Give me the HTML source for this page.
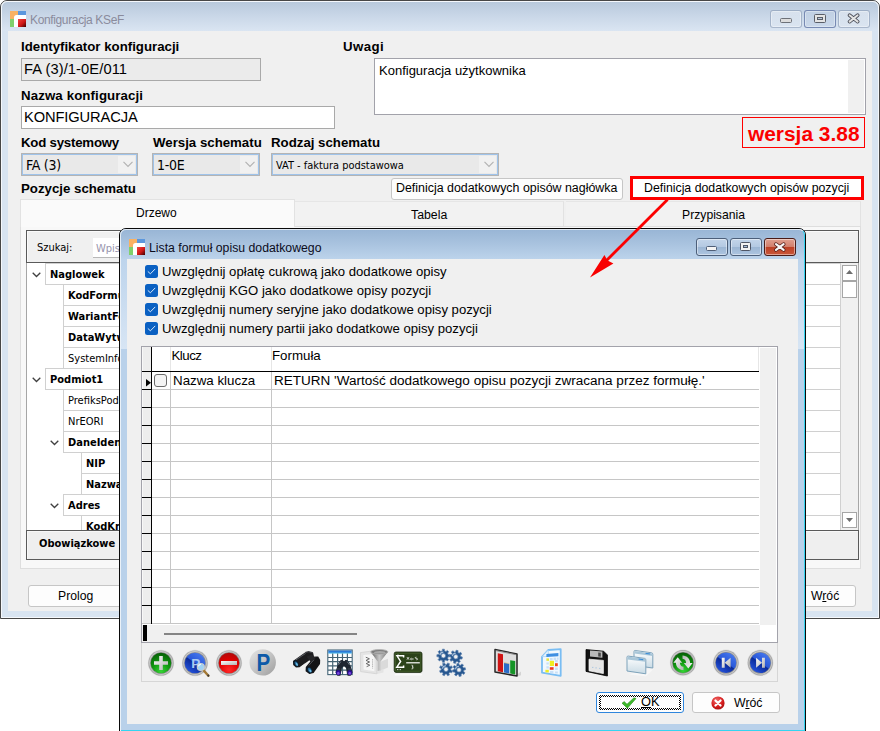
<!DOCTYPE html>
<html lang="pl">
<head>
<meta charset="utf-8">
<title>Konfiguracja KSeF</title>
<style>
html,body{margin:0;padding:0;background:#fff;}
body{width:880px;height:731px;overflow:hidden;position:relative;font-family:"Liberation Sans",sans-serif;color:#000;}
*{box-sizing:border-box;}
.a{position:absolute;}
.t{position:absolute;white-space:nowrap;line-height:1;}
.b13{font-weight:bold;font-size:13.25px;}
.tah{font-family:"DejaVu Sans Condensed","DejaVu Sans",sans-serif;}
/* main window */
#w1{left:0;top:0;width:880px;height:619px;border:1px solid #474747;border-radius:7px 7px 0 0;background:#d8e4f1;}
#w1 .hl{left:0;top:0;right:0;bottom:0;border:1px solid rgba(255,255,255,.75);border-radius:6px 6px 0 0;}
#w1 .tb{left:1px;top:1px;right:1px;height:29px;border-radius:5px 5px 0 0;background:linear-gradient(#b8c9dc 0%,#c8d6e7 45%,#dae5f2 100%);}
#c1{left:8px;top:31px;width:864px;height:580px;background:#f0f0f0;}
.cb{position:absolute;top:10px;height:18px;width:32px;border:1px solid rgba(120,140,170,.55);border-radius:3px;background:linear-gradient(rgba(255,255,255,.35),rgba(255,255,255,.12));box-shadow:inset 0 0 0 1px rgba(255,255,255,.35);}
.inp{position:absolute;border:1px solid #a9a9a9;background:#fff;}
.combo{position:absolute;height:23px;border:1px solid #b4b4b4;background:#e9e9e9;box-shadow:inset 0 0 0 1px #9fc3ea;}
.combo .dd{position:absolute;right:2px;top:2px;bottom:2px;width:17px;background:#f1f1f1;}
.btn{position:absolute;border:1px solid #c6c6c6;border-radius:3px;background:#fdfdfd;font-size:12px;}
.tree{font-family:"DejaVu Sans Condensed","DejaVu Sans",sans-serif;}
.tree .r{position:absolute;height:22px;border:1px solid #d0d0d0;background:#fff;right:17px;}
.tree .r span{position:absolute;left:4px;top:5.3px;font-size:11px;line-height:1;white-space:nowrap;}
/* dialog */
#w2{left:119px;top:228px;width:687px;height:520px;border:1px solid #0a0a0a;border-radius:7px 7px 0 0;background:#b9d1ea;}

.cb2{top:238px;height:18px;width:32px;border:1px solid #4c5f7a;border-radius:3px;background:linear-gradient(#c3d5ea 0%,#b4c9e2 48%,#9cb6d4 52%,#adc5e0 100%);box-shadow:inset 0 0 0 1px rgba(255,255,255,.45);}
.cbx{border-color:#4a1c18;background:linear-gradient(#e0a090 0%,#d27f6c 48%,#bd4126 52%,#c9573a 100%);}
</style>
</head>
<body>
<!-- ================= MAIN WINDOW ================= -->
<div id="w1" class="a">
 <div class="a tb"></div>
 <div class="a hl"></div>
</div>
<div id="c1" class="a"></div>

<!-- title bar main -->
<svg class="a" style="left:10px;top:11px" width="16" height="16" viewBox="0 0 16 16">
 <rect x="0" y="0" width="8" height="8" fill="#f9b162"/>
 <rect x="8" y="0" width="8" height="4" fill="#5b97dd"/>
 <rect x="0" y="8" width="4" height="8" fill="#7fd06c"/>
 <path d="M4 16V6.5Q4 4 6.5 4H16V16Z" fill="#fff"/>
 <defs><linearGradient id="rg" x1="0" y1="0" x2="1" y2="1"><stop offset="0" stop-color="#f0453f"/><stop offset=".55" stop-color="#d01818"/><stop offset="1" stop-color="#3a0000"/></linearGradient></defs>
 <rect x="8" y="8" width="8" height="8" fill="url(#rg)"/>
</svg>
<div class="t" style="left:30px;top:14px;font-size:12px;letter-spacing:-.36px;color:#8a8b9c">Konfiguracja KSeF</div>
<div class="cb" style="left:770px"><i class="a" style="left:9px;top:7px;width:12px;height:5px;border:1px solid #6d7178;border-radius:1.5px;background:#dcdcdc"></i></div>
<div class="cb" style="left:804px;border-color:rgba(100,120,165,.8);background:rgba(190,205,228,.5)"><i class="a" style="left:9px;top:3px;width:12px;height:9px;border:1px solid #5a5e68;border-radius:1.5px;background:#e4e4e4"></i><i class="a" style="left:12px;top:6px;width:6px;height:3px;border:1px solid #5a5e68;background:#b9c8dc"></i></div>
<div class="cb" style="left:838px"><svg class="a" style="left:8px;top:2px" width="14" height="11" viewBox="0 0 14 11"><path d="M2.6 2.2L10.6 8.6M10.6 2.2L2.6 8.6" stroke="#474a55" stroke-width="3.7" stroke-linecap="round"/><path d="M2.6 2.2L10.6 8.6M10.6 2.2L2.6 8.6" stroke="#e2e2e2" stroke-width="2" stroke-linecap="round"/></svg></div>

<!-- form -->
<div class="t b13" style="left:21px;top:40px">Identyfikator konfiguracji</div>
<div class="inp" style="left:21px;top:58px;width:240px;height:23px;background:#ebebeb"></div>
<div class="t" style="left:24px;top:62px;font-size:14.67px;letter-spacing:.1px">FA (3)/1-0E/011</div>
<div class="t b13" style="left:343px;top:40px;letter-spacing:.4px">Uwagi</div>
<div class="inp" style="left:374px;top:58px;width:492px;height:57px;border-color:#a2a2aa"><i class="a" style="right:1px;top:1px;bottom:1px;width:16px;background:#f0f0f0"></i></div>
<div class="t" style="left:379px;top:64px;font-size:13px">Konfiguracja użytkownika</div>
<div class="t b13" style="left:21px;top:89px;letter-spacing:.12px">Nazwa konfiguracji</div>
<div class="inp" style="left:21px;top:106px;width:314px;height:23px"></div>
<div class="t" style="left:24px;top:110px;font-size:14.67px;letter-spacing:-.1px">KONFIGURACJA</div>
<div class="t b13" style="left:21px;top:136px;letter-spacing:-.22px">Kod systemowy</div>
<div class="t b13" style="left:153px;top:136px">Wersja schematu</div>
<div class="t b13" style="left:271px;top:136px">Rodzaj schematu</div>
<div class="combo" style="left:21px;top:153px;width:117px"><i class="dd"></i></div>
<div class="combo" style="left:152px;top:153px;width:108px"><i class="dd"></i></div>
<div class="combo" style="left:271px;top:153px;width:228px"><i class="dd"></i></div>
<div class="t tah" style="left:26px;top:158px;font-size:14px;letter-spacing:-.25px">FA (3)</div>
<div class="t tah" style="left:157px;top:158px;font-size:14px;letter-spacing:-.25px">1-0E</div>
<div class="t tah" style="left:276px;top:161.2px;font-size:10.95px">VAT - faktura podstawowa</div>
<svg class="a" style="left:123px;top:161px" width="10" height="7"><path d="M0.5 0.8L5 5.3 9.5 0.8" fill="none" stroke="#b3b3b3" stroke-width="1.2"/></svg>
<svg class="a" style="left:245px;top:161px" width="10" height="7"><path d="M0.5 0.8L5 5.3 9.5 0.8" fill="none" stroke="#b3b3b3" stroke-width="1.2"/></svg>
<svg class="a" style="left:484px;top:161px" width="10" height="7"><path d="M0.5 0.8L5 5.3 9.5 0.8" fill="none" stroke="#b3b3b3" stroke-width="1.2"/></svg>
<div class="a" style="left:742px;top:117px;width:123px;height:31px;border:1px solid #f00"></div>
<div class="t" style="left:748px;top:124px;font-size:20.9px;font-weight:bold;color:#fb0000">wersja 3.88</div>
<div class="t b13" style="left:21px;top:182px">Pozycje schematu</div>
<div class="btn" style="left:391px;top:178px;width:232px;height:22px"></div>
<div class="t" style="left:396px;top:182px;font-size:12.42px">Definicja dodatkowych opisów nagłówka</div>
<div class="a" style="left:630px;top:176px;width:234px;height:24px;border:3px solid #fe0000;background:#fff"></div>
<div class="t" style="left:644px;top:182px;font-size:12.32px">Definicja dodatkowych opisów pozycji</div>

<!-- tabs -->
<div class="a" style="left:20px;top:226px;width:841px;height:343px;background:#f8f8f8;border:1px solid #dedede"></div>
<div class="a" style="left:20px;top:199px;width:275px;height:28px;background:#fafafa;border:1px solid #e2e2e2;border-bottom:0"></div>
<div class="a" style="left:295px;top:201px;width:269px;height:25px;background:#f2f2f2;border-top:1px solid #e6e6e6;border-right:1px solid #e2e2e2"></div>
<div class="a" style="left:566px;top:201px;width:295px;height:25px;background:#f2f2f2;border-top:1px solid #e6e6e6;border-right:1px solid #e2e2e2"></div>
<div class="t" style="left:136px;top:207px;font-size:12px">Drzewo</div>
<div class="t" style="left:411px;top:209px;font-size:12.3px">Tabela</div>
<div class="t" style="left:682px;top:209px;font-size:12.2px">Przypisania</div>

<!-- inner panel -->
<div class="a" style="left:26px;top:230px;width:833px;height:330px;border:1px solid #a6a6a6;background:#fff"></div>
<div class="a" style="left:26px;top:230px;width:833px;height:33px;border:1px solid #5a5a5a;background:#f0f0f0;box-shadow:inset 1px 1px 0 #fbfbfb"></div>
<div class="a" style="left:26px;top:530px;width:833px;height:30px;border:1px solid #5a5a5a;background:#efefef;box-shadow:inset 1px 1px 0 #f8f8f8"></div>
<div class="t tah" style="left:37px;top:242px;font-size:11px">Szukaj:</div>
<div class="a" style="left:93px;top:238px;width:300px;height:20px;background:#fff;border-bottom:1px solid #b8b8b8"></div>
<div class="t tah" style="left:96px;top:243px;font-size:11px;color:#9794ad">Wpisz</div>
<div class="a tree" style="left:27px;top:263px;width:831px;height:267px;background:#fff;overflow:hidden" id="tree"><div class="r" style="left:18px;top:0px"><span style="font-weight:bold">Naglowek</span></div><svg class="a" style="left:5px;top:9px" width="9" height="6"><path d="M0.7 0.7L4.5 4.5 8.3 0.7" fill="none" stroke="#404040" stroke-width="1.3"/></svg><div class="r" style="left:36px;top:21px"><span style="font-weight:bold">KodFormularza</span></div><div class="r" style="left:36px;top:42px"><span style="font-weight:bold">WariantFormularza</span></div><div class="r" style="left:36px;top:63px"><span style="font-weight:bold">DataWytworzeniaFa</span></div><div class="r" style="left:36px;top:84px"><span>SystemInfo</span></div><div class="r" style="left:18px;top:105px"><span style="font-weight:bold">Podmiot1</span></div><svg class="a" style="left:5px;top:114px" width="9" height="6"><path d="M0.7 0.7L4.5 4.5 8.3 0.7" fill="none" stroke="#404040" stroke-width="1.3"/></svg><div class="r" style="left:36px;top:126px"><span>PrefiksPodatnika</span></div><div class="r" style="left:36px;top:147px"><span>NrEORI</span></div><div class="r" style="left:36px;top:168px"><span style="font-weight:bold">DaneIdentyfikacyjne</span></div><svg class="a" style="left:23px;top:177px" width="9" height="6"><path d="M0.7 0.7L4.5 4.5 8.3 0.7" fill="none" stroke="#404040" stroke-width="1.3"/></svg><div class="r" style="left:54px;top:189px"><span style="font-weight:bold">NIP</span></div><div class="r" style="left:54px;top:210px"><span style="font-weight:bold">Nazwa</span></div><div class="r" style="left:36px;top:231px"><span style="font-weight:bold">Adres</span></div><svg class="a" style="left:23px;top:240px" width="9" height="6"><path d="M0.7 0.7L4.5 4.5 8.3 0.7" fill="none" stroke="#404040" stroke-width="1.3"/></svg><div class="r" style="left:54px;top:252px"><span style="font-weight:bold">KodKraju</span></div></div>
<div class="t tah" style="left:39px;top:538px;font-size:11px;font-weight:bold">Obowiązkowe</div>
<!-- tree scrollbar -->

<div class="a" style="left:841px;top:263px;width:17px;height:267px;background:#f0f0f0"></div>
<div class="a" style="left:842px;top:265px;width:15px;height:16px;background:#fff;border:1px solid #a6a6a6"></div>
<div class="a" style="left:842px;top:281px;width:15px;height:17px;background:#fff;border:1px solid #a6a6a6"></div>
<div class="a" style="left:842px;top:512px;width:15px;height:16px;background:#fff;border:1px solid #a6a6a6"></div>
<svg class="a" style="left:846px;top:270px" width="7" height="4"><path d="M0 4L3.5 0 7 4Z" fill="#6e6e6e"/></svg>
<svg class="a" style="left:846px;top:518px" width="7" height="4"><path d="M0 0L3.5 4 7 0Z" fill="#6e6e6e"/></svg>

<!-- bottom buttons -->
<div class="btn" style="left:28px;top:585px;width:95px;height:22px"></div>
<div class="t" style="left:58px;top:590px;font-size:12.2px">Prolog</div>
<div class="btn" style="left:760px;top:585px;width:96px;height:22px"></div>
<div class="t" style="left:811px;top:590px;font-size:12.2px">W<u>r</u>óć</div>
<!-- ================= DIALOG ================= -->
<div id="w2" class="a"></div>
<div class="a" style="left:120px;top:229px;width:685px;height:30px;border-radius:6px 6px 0 0;background:linear-gradient(#98b5d5 0%,#a9c3df 50%,#bcd3eb 100%)"></div>
<div class="a" style="left:120px;top:229px;width:685px;height:520px;border:1px solid rgba(255,255,255,.7);border-right:1px solid #35d4f0;border-radius:6px 6px 0 0"></div>
<div class="a" style="left:121px;top:730px;width:684px;height:1px;background:#35d4f0"></div>
<div class="a" style="left:121px;top:259px;width:6px;height:90px;background:linear-gradient(#bdd4ec,#d7e5f4)"></div><div class="a" style="left:798px;top:259px;width:6px;height:90px;background:linear-gradient(#bdd4ec,#d7e5f4)"></div>
<div class="a" style="left:127px;top:259px;width:671px;height:465px;background:#f0f0f0"></div>
<svg class="a" style="left:129px;top:239px" width="16" height="16" viewBox="0 0 16 16">
 <rect x="0" y="0" width="8" height="8" fill="#f9b162"/>
 <rect x="8" y="0" width="8" height="4" fill="#5b97dd"/>
 <rect x="0" y="8" width="4" height="8" fill="#7fd06c"/>
 <path d="M4 16V6.5Q4 4 6.5 4H16V16Z" fill="#fff"/>
 <rect x="8" y="8" width="8" height="8" fill="url(#rg)"/>
</svg>
<div class="t" style="left:149px;top:242.4px;font-size:12.27px;color:#0c0c1c">Lista formuł opisu dodatkowego</div>
<!-- caption buttons -->
<div class="a cb2" style="left:696px"><i class="a" style="left:9px;top:7px;width:11px;height:5px;border:1px solid #4f5f78;border-radius:1.5px;background:#f4f4f4"></i></div>
<div class="a cb2" style="left:730px"><i class="a" style="left:9px;top:3px;width:11px;height:9px;border:1px solid #4f5666;border-radius:1.5px;background:#f2f2f2"></i><i class="a" style="left:12px;top:6px;width:5px;height:3px;border:1px solid #4f5666;background:#a5bcd8"></i></div>
<div class="a cb2 cbx" style="left:764px;width:32px"><svg class="a" style="left:8px;top:2px" width="14" height="12" viewBox="0 0 14 12"><path d="M3 3.2L10.6 8.8M10.6 3.2L3 8.8" stroke="#55211c" stroke-width="3.8" stroke-linecap="round"/><path d="M3 3.2L10.6 8.8M10.6 3.2L3 8.8" stroke="#f8f8f8" stroke-width="2.2" stroke-linecap="round"/></svg></div>

<!-- checkboxes -->
<div class="a" style="left:145px;top:265px;width:13px;height:13px;border-radius:2.5px;background:#0a60c2"><svg class="a" style="left:2px;top:3px" width="9" height="7"><path d="M0.8 3.4L3.4 5.8 8.2 0.9" fill="none" stroke="#d8e8fa" stroke-width="1"/></svg></div>
<div class="t" style="left:162px;top:265px;font-size:13.13px">Uwzględnij opłatę cukrową jako dodatkowe opisy</div>
<div class="a" style="left:145px;top:284px;width:13px;height:13px;border-radius:2.5px;background:#0a60c2"><svg class="a" style="left:2px;top:3px" width="9" height="7"><path d="M0.8 3.4L3.4 5.8 8.2 0.9" fill="none" stroke="#d8e8fa" stroke-width="1"/></svg></div>
<div class="t" style="left:162px;top:284px;font-size:13.13px">Uwzględnij KGO jako dodatkowe opisy pozycji</div>
<div class="a" style="left:145px;top:303px;width:13px;height:13px;border-radius:2.5px;background:#0a60c2"><svg class="a" style="left:2px;top:3px" width="9" height="7"><path d="M0.8 3.4L3.4 5.8 8.2 0.9" fill="none" stroke="#d8e8fa" stroke-width="1"/></svg></div>
<div class="t" style="left:162px;top:303px;font-size:13.13px">Uwzględnij numery seryjne jako dodatkowe opisy pozycji</div>
<div class="a" style="left:145px;top:322px;width:13px;height:13px;border-radius:2.5px;background:#0a60c2"><svg class="a" style="left:2px;top:3px" width="9" height="7"><path d="M0.8 3.4L3.4 5.8 8.2 0.9" fill="none" stroke="#d8e8fa" stroke-width="1"/></svg></div>
<div class="t" style="left:162px;top:322px;font-size:13.13px">Uwzględnij numery partii jako dodatkowe opisy pozycji</div>

<!-- grid -->
<div class="a" style="left:141px;top:346px;width:637px;height:297px;border:1px solid #a3a3ab;background:#fff"></div>
<div class="a" style="left:760px;top:348px;width:16px;height:277px;background:#f0f0f0"></div>
<div class="a" style="left:142px;top:625px;width:618px;height:17px;background:#f0f0f0"></div>
<div class="a" style="left:142px;top:347px;width:9px;height:277px;background:#ededed;border-left:1px solid #f8f8f8"></div>
<div class="a" style="left:152px;top:389px;width:607px;height:1px;background:#c6c6c6"></div><div class="a" style="left:142px;top:389px;width:9px;height:1px;background:#000"></div><div class="a" style="left:152px;top:407px;width:607px;height:1px;background:#c6c6c6"></div><div class="a" style="left:142px;top:407px;width:9px;height:1px;background:#000"></div><div class="a" style="left:152px;top:425px;width:607px;height:1px;background:#c6c6c6"></div><div class="a" style="left:142px;top:425px;width:9px;height:1px;background:#000"></div><div class="a" style="left:152px;top:443px;width:607px;height:1px;background:#c6c6c6"></div><div class="a" style="left:142px;top:443px;width:9px;height:1px;background:#000"></div><div class="a" style="left:152px;top:461px;width:607px;height:1px;background:#c6c6c6"></div><div class="a" style="left:142px;top:461px;width:9px;height:1px;background:#000"></div><div class="a" style="left:152px;top:479px;width:607px;height:1px;background:#c6c6c6"></div><div class="a" style="left:142px;top:479px;width:9px;height:1px;background:#000"></div><div class="a" style="left:152px;top:497px;width:607px;height:1px;background:#c6c6c6"></div><div class="a" style="left:142px;top:497px;width:9px;height:1px;background:#000"></div><div class="a" style="left:152px;top:515px;width:607px;height:1px;background:#c6c6c6"></div><div class="a" style="left:142px;top:515px;width:9px;height:1px;background:#000"></div><div class="a" style="left:152px;top:533px;width:607px;height:1px;background:#c6c6c6"></div><div class="a" style="left:142px;top:533px;width:9px;height:1px;background:#000"></div><div class="a" style="left:152px;top:551px;width:607px;height:1px;background:#c6c6c6"></div><div class="a" style="left:142px;top:551px;width:9px;height:1px;background:#000"></div><div class="a" style="left:152px;top:569px;width:607px;height:1px;background:#c6c6c6"></div><div class="a" style="left:142px;top:569px;width:9px;height:1px;background:#000"></div><div class="a" style="left:152px;top:587px;width:607px;height:1px;background:#c6c6c6"></div><div class="a" style="left:142px;top:587px;width:9px;height:1px;background:#000"></div><div class="a" style="left:152px;top:605px;width:607px;height:1px;background:#c6c6c6"></div><div class="a" style="left:142px;top:605px;width:9px;height:1px;background:#000"></div><div class="a" style="left:152px;top:623px;width:607px;height:1px;background:#c6c6c6"></div><div class="a" style="left:142px;top:623px;width:9px;height:1px;background:#c6c6c6"></div><div class="a" style="left:170px;top:372px;width:1px;height:252px;background:#c6c6c6"></div><div class="a" style="left:271px;top:372px;width:1px;height:252px;background:#c6c6c6"></div><div class="a" style="left:170px;top:347px;width:1px;height:24px;background:#e6e6e6"></div><div class="a" style="left:271px;top:347px;width:1px;height:24px;background:#e6e6e6"></div><div class="a" style="left:758px;top:347px;width:1px;height:24px;background:#e6e6e6"></div>
<div class="a" style="left:151px;top:347px;width:1px;height:277px;background:#000"></div>
<div class="a" style="left:142px;top:371px;width:617px;height:1px;background:#000"></div>
<div class="a" style="left:143px;top:625px;width:4px;height:16px;background:#000"></div>
<div class="a" style="left:164px;top:633px;width:193px;height:2px;background:#858585"></div>
<div class="t" style="left:171.5px;top:348.8px;font-size:13.3px;letter-spacing:-.5px">Klucz</div>
<div class="t" style="left:272px;top:348.8px;font-size:13.3px">Formuła</div>
<svg class="a" style="left:146px;top:379px" width="5" height="8"><path d="M0 0L5 3.7 0 7.4Z" fill="#000"/></svg>
<div class="a" style="left:154px;top:374px;width:13px;height:13px;border:1px solid #6b6b6b;border-radius:3px;background:#f4f4f4"></div>
<div class="t" style="left:173px;top:374px;font-size:13.33px">Nazwa klucza</div>
<div class="t" style="left:274px;top:374px;font-size:13.52px">RETURN 'Wartość dodatkowego opisu pozycji zwracana przez formułę.'</div>
<!-- toolbar -->
<div class="a" style="left:141px;top:643px;width:637px;height:39px;border:1px solid #d6d6d6;border-top:0"></div>
<svg class="a" style="left:141px;top:643px" width="637" height="39" viewBox="141 643 637 39">
<defs>
 <linearGradient id="ringg" x1="0" y1="0" x2="1" y2="1"><stop offset="0" stop-color="#d6d6d6"/><stop offset=".5" stop-color="#bcbcbc"/><stop offset="1" stop-color="#cecece"/></linearGradient>
 <radialGradient id="gg" cx=".5" cy=".9" r=".95"><stop offset="0" stop-color="#36d436"/><stop offset=".45" stop-color="#119811"/><stop offset="1" stop-color="#045804"/></radialGradient>
 <radialGradient id="rr" cx=".5" cy=".85" r=".9"><stop offset="0" stop-color="#ff2a2a"/><stop offset=".55" stop-color="#e00000"/><stop offset="1" stop-color="#a80c0c"/></radialGradient>
 <linearGradient id="bb" x1=".85" y1="0" x2=".15" y2="1"><stop offset="0" stop-color="#4a7cf0"/><stop offset=".48" stop-color="#2a58d8"/><stop offset=".52" stop-color="#0a2a98"/><stop offset="1" stop-color="#2a5ae8"/></linearGradient>
 <linearGradient id="gp" x1="0" y1="0" x2="1" y2="1"><stop offset="0" stop-color="#e6e6e6"/><stop offset=".5" stop-color="#c4c4c4"/><stop offset="1" stop-color="#9c9c9c"/></linearGradient>
 <linearGradient id="wg" x1="0" y1="0" x2="1" y2="1"><stop offset="0" stop-color="#fafafa"/><stop offset="1" stop-color="#b4b4b4"/></linearGradient>
 <linearGradient id="win" x1="0" y1="0" x2="0" y2="1"><stop offset="0" stop-color="#ffffff"/><stop offset="1" stop-color="#c9dbe5"/></linearGradient>
 <linearGradient id="fun" x1="0" y1="0" x2="1" y2="0"><stop offset="0" stop-color="#5c5c5c"/><stop offset=".5" stop-color="#c8c8c8"/><stop offset="1" stop-color="#777"/></linearGradient>
</defs>
<!-- add -->
<circle cx="161" cy="663" r="13.2" fill="#dedede"/><circle cx="161" cy="663" r="12.6" fill="#a2a2a2"/><circle cx="161" cy="663" r="11.9" fill="url(#ringg)"/><circle cx="161" cy="663" r="10.8" fill="#8c8c8c"/><circle cx="161" cy="663" r="10.3" fill="url(#gg)"/>
<path d="M159.2 656h3.6v5.2h5.2v3.6h-5.2v5.2h-3.6v-5.2h-5.2v-3.6h5.2z" fill="url(#wg)"/>
<!-- P search -->
<circle cx="195" cy="663" r="13.2" fill="#dedede"/><circle cx="195" cy="663" r="12.6" fill="#a2a2a2"/><circle cx="195" cy="663" r="11.9" fill="url(#ringg)"/><circle cx="195" cy="663" r="10.8" fill="#8c8c8c"/><circle cx="195" cy="663" r="10.3" fill="url(#bb)"/>
<text x="191.2" y="668.3" font-family="Liberation Sans,sans-serif" font-weight="bold" font-size="13.5" fill="#a9c9f2">P</text>
<path d="M203.6 670.4L208.4 675.8" stroke="#a57a36" stroke-width="2.4" stroke-linecap="round"/>
<circle cx="208.3" cy="675.6" r="1.1" fill="#3a3a3a"/>
<circle cx="200.8" cy="667" r="3.5" fill="#9fd2f5" stroke="#c9ced2" stroke-width="1.2"/>
<path d="M198.4 666.4a2.4 2.4 0 0 1 2.6-2" stroke="#e8f6ff" stroke-width="1.2" fill="none"/>
<!-- minus -->
<circle cx="229" cy="663" r="13.2" fill="#dedede"/><circle cx="229" cy="663" r="12.6" fill="#a2a2a2"/><circle cx="229" cy="663" r="11.9" fill="url(#ringg)"/><circle cx="229" cy="663" r="10.8" fill="#8c8c8c"/><circle cx="229" cy="663" r="10.3" fill="url(#rr)"/>
<rect x="221" y="661" width="16" height="4" fill="url(#wg)"/>
<!-- P gray -->
<circle cx="262.7" cy="662.4" r="13.2" fill="url(#gp)"/>
<text transform="translate(256.4 671.4) scale(.88 1)" font-family="Liberation Sans,sans-serif" font-weight="bold" font-size="23.4" fill="#0d5aa8">P</text>
<!-- binoculars -->
<g>
 <path d="M293 661L304.6 652.8 308.6 651.8 313.2 653 313.8 656 310.4 659.4 299.6 667.2 296 667.6 293.2 665Z" fill="#1c1c1e"/>
 <path d="M305.8 667L312 659.6 315.4 656.4 318.2 656.6 320.2 660 320 664 313.6 673 309.4 674 305.6 671.2Z" fill="#141416"/>
 <path d="M306.6 656.8L311.4 654.4 316 657.4 311.2 662.6Z" fill="#252528"/>
 <path d="M305.2 652.6l3.4-1 4.4 1.2" stroke="#3a3b40" stroke-width="1.2" fill="none"/>
 <path d="M296 659.8L305.6 653.4" stroke="#5c5e64" stroke-width="1"/>
 <path d="M308.8 665.4L314 659.8" stroke="#4c4e54" stroke-width="1"/>
 <path d="M300.4 667L305 663.4 305.4 666.6Z" fill="#f0f0f0"/>
 <ellipse cx="296" cy="663.4" rx="2.3" ry="3.5" transform="rotate(-32 296 663.4)" fill="#0c1c2a"/>
 <ellipse cx="296.4" cy="663.8" rx="1.4" ry="2.5" transform="rotate(-32 296.4 663.8)" fill="#2a6f9f"/>
 <ellipse cx="296.9" cy="664.4" rx=".7" ry="1.4" transform="rotate(-32 296.9 664.4)" fill="#79c6e8"/>
 <ellipse cx="309.3" cy="669.8" rx="2.6" ry="3.6" transform="rotate(-36 309.3 669.8)" fill="#0c1c2a"/>
 <ellipse cx="309.8" cy="670.2" rx="1.6" ry="2.6" transform="rotate(-36 309.8 670.2)" fill="#286a9a"/>
 <ellipse cx="310.3" cy="670.8" rx=".8" ry="1.5" transform="rotate(-36 310.3 670.8)" fill="#74c2e6"/>
</g>
<!-- table + binoculars -->
<g>
 <rect x="327.8" y="650" width="24.4" height="24.6" fill="#ffffff" stroke="#456678" stroke-width="1.1"/>
 <rect x="328.3" y="650.5" width="23.4" height="2.6" fill="#2b79d6"/>
 <rect x="328.3" y="652.6" width="23.4" height="1" fill="#55c2ee"/>
 <path d="M328 657.5h24M328 661.7h24M328 665.9h24M328 670.1h24M332.7 653.5v21M337.6 653.5v21M342.5 653.5v21M347.4 653.5v21" stroke="#456373" stroke-width="1.2"/>
 <path d="M335.4 672.5L338 664 340.2 660.6 342.4 659.8 344 661.4 345.6 659.8 347.8 660.6 350 664 352.6 672.5 350.6 675.8 347.6 675.8 346 668 344 666 342 668 340.4 675.8 337.4 675.8Z" fill="#1f2530"/>
 <path d="M338.4 665L340.8 661.6M349.6 665L347.2 661.6" stroke="#66727f" stroke-width="1"/>
 <path d="M336.8 669h3.4M347.8 669h3.4" stroke="#3d4654" stroke-width="1"/>
 <ellipse cx="338.3" cy="672.6" rx="2.3" ry="2.7" fill="#2a0c98"/>
 <ellipse cx="349.7" cy="672.6" rx="2.3" ry="2.7" fill="#2a0c98"/>
 <ellipse cx="338.3" cy="673.2" rx="1.3" ry="1.5" fill="#7848d8"/>
 <ellipse cx="349.7" cy="673.2" rx="1.3" ry="1.5" fill="#7848d8"/>
</g>
<!-- filter doc -->
<g>
 <path d="M381 661.5L388 658.8 388 667.4 381 670.6Z" fill="#dadada"/><path d="M377 671.5L383.5 669 383.5 672.5 377 674Z" fill="#e4e4e4"/>
 <path d="M360.4 652.6L372 651 376.8 654.6 376.8 673.8 360.6 671.6Z" fill="#e4e4e4" stroke="#d2d2d2" stroke-width=".8"/>
 <path d="M363.4 655L371.6 654.2 374.4 656.4 374.4 671.2 363.6 669.6Z" fill="#f6f6f6"/>
 <path d="M365.8 657.2l3.6 1.6-3.4 1.6 3.6 1.6-3.4 1.6 3.6 1.6-3.2 1.5" stroke="#5e5e5e" stroke-width=".9" fill="none"/>
 <path d="M372.6 659.4v9" stroke="#8a8a8a" stroke-width=".9" stroke-dasharray="1 1.1"/>
 <path d="M370.8 652L387.8 652 380.6 661.4 380.6 670.4 377.6 671 377.6 661.4Z" fill="url(#fun)"/>
 <ellipse cx="379.3" cy="651.9" rx="8.6" ry="2.4" fill="#7c7c7c" stroke="#b4b4b4" stroke-width=".9"/>
 <ellipse cx="379.8" cy="652.3" rx="6" ry="1.2" fill="#a9a9a9"/>
</g>
<!-- sigma board -->
<g>
 <rect x="394.6" y="674" width="27.4" height="1.6" rx=".8" fill="#fafafa"/>
 <rect x="394.2" y="652" width="27.8" height="20.4" rx="1.8" fill="#2b4219" stroke="#1c2c10" stroke-width=".8"/>
 <rect x="395.4" y="653.2" width="25.4" height="18" rx="1.2" fill="none" stroke="#47632e" stroke-width=".8"/>
 <path d="M403.6 657.6v-1.8h-6.6l3.6 5.6-3.8 5.8h6.8v-1.8" fill="none" stroke="#fff" stroke-width="1.5"/>
 <path d="M406.2 662.8h13.6" stroke="#fff" stroke-width="1.2"/>
 <path d="M407 659.6l2 -2.4M407 657.2l2 2.4M411.2 659h2.4M411.4 658.2l-1 .8 1 .8M416.4 657.2c-1.6 0 -1.6 1.2 0 1.2s1.6 1.4 0 1.4" stroke="#f2f2f2" stroke-width=".9" fill="none"/>
 <path d="M411.6 665.2c1.8 0 1.8 1.6 .4 1.7 1.6 .1 1.6 2 -.4 2" stroke="#f2f2f2" stroke-width=".9" fill="none"/>
 <path d="M397 669.6h1.4M399.6 669.6h1.4M397.6 654.6h.8" stroke="#e8e8e8" stroke-width=".8"/>
</g>
<!-- gears -->
<g id="gears"><path d="M449.9 654.7 L449.9 656.7 L448.2 656.8 L447.6 658.3 L448.7 659.6 L447.3 661.0 L446.0 659.9 L444.5 660.5 L444.4 662.2 L442.4 662.2 L442.3 660.5 L440.8 659.9 L439.5 661.0 L438.1 659.6 L439.2 658.3 L438.6 656.8 L436.9 656.7 L436.9 654.7 L438.6 654.6 L439.2 653.1 L438.1 651.8 L439.5 650.4 L440.8 651.5 L442.3 650.9 L442.4 649.2 L444.4 649.2 L444.5 650.9 L446.0 651.5 L447.3 650.4 L448.7 651.8 L447.6 653.1 L448.2 654.6Z M441.2 655.7 a2.2 2.2 0 1 0 4.4 0 a2.2 2.2 0 1 0 -4.4 0Z" fill="#27578f" fill-rule="evenodd" stroke="#5d83b0" stroke-width=".7" stroke-linejoin="round"/><path d="M439.8 655.1a3.6 3.6 0 0 1 3.6 -3.0" stroke="#a9c0da" stroke-width="1.1" fill="none"/><path d="M462.4 657.1 L462.0 659.1 L460.2 658.9 L459.4 660.1 L460.3 661.7 L458.5 662.8 L457.5 661.4 L456.0 661.7 L455.5 663.4 L453.5 663.0 L453.7 661.2 L452.5 660.4 L450.9 661.3 L449.8 659.5 L451.2 658.5 L450.9 657.0 L449.2 656.5 L449.6 654.5 L451.4 654.7 L452.2 653.5 L451.3 651.9 L453.1 650.8 L454.1 652.2 L455.6 651.9 L456.1 650.2 L458.1 650.6 L457.9 652.4 L459.1 653.2 L460.7 652.3 L461.8 654.1 L460.4 655.1 L460.7 656.6Z M453.6 656.8 a2.2 2.2 0 1 0 4.4 0 a2.2 2.2 0 1 0 -4.4 0Z" fill="#27578f" fill-rule="evenodd" stroke="#5d83b0" stroke-width=".7" stroke-linejoin="round"/><path d="M452.2 656.2a3.6 3.6 0 0 1 3.6 -3.0" stroke="#a9c0da" stroke-width="1.1" fill="none"/><path d="M452.4 670.9 L451.6 672.8 L449.9 672.2 L448.9 673.3 L449.4 675.0 L447.5 675.7 L446.7 674.1 L445.2 674.1 L444.4 675.7 L442.5 674.9 L443.1 673.2 L442.0 672.2 L440.3 672.7 L439.6 670.8 L441.2 670.0 L441.2 668.5 L439.6 667.7 L440.4 665.8 L442.1 666.4 L443.1 665.3 L442.6 663.6 L444.5 662.9 L445.3 664.5 L446.8 664.5 L447.6 662.9 L449.5 663.7 L448.9 665.4 L450.0 666.4 L451.7 665.9 L452.4 667.8 L450.8 668.6 L450.8 670.1Z M443.8 669.3 a2.2 2.2 0 1 0 4.4 0 a2.2 2.2 0 1 0 -4.4 0Z" fill="#27578f" fill-rule="evenodd" stroke="#5d83b0" stroke-width=".7" stroke-linejoin="round"/><path d="M442.4 668.7a3.6 3.6 0 0 1 3.6 -3.0" stroke="#a9c0da" stroke-width="1.1" fill="none"/><path d="M465.0 672.7 L463.8 674.4 L462.3 673.5 L461.0 674.4 L461.2 676.1 L459.2 676.5 L458.8 674.8 L457.3 674.5 L456.2 675.9 L454.5 674.7 L455.4 673.2 L454.5 671.9 L452.8 672.1 L452.4 670.1 L454.1 669.7 L454.4 668.2 L453.0 667.1 L454.2 665.4 L455.7 666.3 L457.0 665.4 L456.8 663.7 L458.8 663.3 L459.2 665.0 L460.7 665.3 L461.8 663.9 L463.5 665.1 L462.6 666.6 L463.5 667.9 L465.2 667.7 L465.6 669.7 L463.9 670.1 L463.6 671.6Z M456.8 669.9 a2.2 2.2 0 1 0 4.4 0 a2.2 2.2 0 1 0 -4.4 0Z" fill="#27578f" fill-rule="evenodd" stroke="#5d83b0" stroke-width=".7" stroke-linejoin="round"/><path d="M455.4 669.3a3.6 3.6 0 0 1 3.6 -3.0" stroke="#a9c0da" stroke-width="1.1" fill="none"/></g>
<!-- bar chart -->
<g>
 <path d="M517 674.5L521 671.5 521 675.2 517 676.5Z" fill="#d4d4d4"/>
 <path d="M495 649.6L517 654 517 676 495 672Z" fill="#dedede" stroke="#262626" stroke-width="1.5" stroke-linejoin="round"/>
 <path d="M495.8 650.6L516.2 654.7" stroke="#8a8a8a" stroke-width="1"/>
 <path d="M497.8 653.2L503 654.2 503 672.2 497.8 671.2Z" fill="#cf1313"/>
 <path d="M504 662.6L509.2 663.4 509.2 673.4 504 672.4Z" fill="#2c6dc8"/>
 <path d="M510.2 660.2L515.2 661 515.2 674.5 510.2 673.6Z" fill="#159427"/>
 <path d="M504 662.6L509.2 663.4" stroke="#f2d48a" stroke-width=".8"/>
</g>
<!-- spreadsheet -->
<g>
 <path d="M548.2 650L560.7 649.2 560.7 675.8 542 672.7 542 656.8Z" fill="#f1f8fe" stroke="#79bdf3" stroke-width="1.8" stroke-linejoin="round"/>
 <path d="M542 656.8L548.2 650 548.4 656.4Z" fill="#e6f3fd" stroke="#9dd0f6" stroke-width=".7"/>
 <path d="M546.4 654L558.4 653 558.4 656.2 546.4 657Z" fill="#3f8fe2"/>
 <path d="M546.4 658.4h2.6v2.4h-2.6z" fill="#e8e43a"/><path d="M550 658h2.6v2.4H550z" fill="#c9e0f7"/><path d="M553.6 657.6h2.6v2.4h-2.6z" fill="#c9e0f7"/><path d="M557 657.4h1.6v2.4H557z" fill="#c9e0f7"/>
 <path d="M549.8 660.8h4.2v5.2h-4.2z" fill="#f0ee20"/>
 <path d="M555 663.2h2.8v3h-2.8z" fill="#f04820"/>
 <path d="M546.4 662.4h2.4v2.2h-2.4zM546.4 666.2h2.4v2.2h-2.4z" fill="#c9e0f7"/>
 <path d="M549.8 667.2h3.8v2.6h-3.8z" fill="#ee3a22"/>
 <path d="M555 667.6h2.8v2.4h-2.8zM555 660h2.8v2.2h-2.8z" fill="#c9e0f7"/>
 <path d="M545.4 669.8h3.4v2.6h-3.4z" fill="#f0ee20"/>
 <path d="M550 671h3.4v2.2H550zM555 671.4h2.8v2.2h-2.8z" fill="#c9e0f7"/>
</g>
<!-- floppy -->
<g>
 <path d="M586 649.6L603.6 651.2 607.4 655 607.4 676 586 671.4Z" fill="#121212" stroke="#000" stroke-width=".8" stroke-linejoin="round"/>
 <path d="M590 650.4L602.4 651.6 602.4 657.8 590 656.6Z" fill="#b9b9b9"/>
 <path d="M598.2 652.4L600.8 652.7 600.8 656.8 598.2 656.5Z" fill="#4a4a4a"/>
 <path d="M589 659.2L603.4 660.4 603.4 673.6 589 670.8Z" fill="#e6e6e6" stroke="#fff" stroke-width=".7"/>
 <path d="M592 667.4h1.4M595.4 667.9h1.4M599 668.4h1.4" stroke="#9bbfe0" stroke-width=".8"/>
</g>
<!-- windows -->
<g>
 <path d="M629 674.6L646 676.2 653 669.5 646 669Z" fill="#f7f7f7"/>
 <path d="M634 651.6Q634 650.4 635.2 650.5L651.6 652.8Q652.8 653 652.8 654.2V668L634 665.4Z" fill="url(#win)" stroke="#7da2ba" stroke-width="1"/>
 <path d="M634.5 651L652.3 653.4 652.3 656 634.5 653.6Z" fill="#a9c6d8"/>
 <path d="M645.6 653.4l4.6 .6" stroke="#3f8fd8" stroke-width="1.2"/>
 <path d="M627 657.2Q627 656 628.2 656.1L644.6 658.4Q645.8 658.6 645.8 659.8V673.8L627 671Z" fill="url(#win)" stroke="#7da2ba" stroke-width="1"/>
 <path d="M627.5 656.6L645.3 659 645.3 661.8 627.5 659.4Z" fill="#a9c6d8"/>
 <path d="M638.6 659l4.6 .6" stroke="#3f8fd8" stroke-width="1.2"/>
</g>
<!-- refresh -->
<circle cx="683" cy="662.7" r="13.2" fill="#dedede"/><circle cx="683" cy="662.7" r="12.6" fill="#a2a2a2"/><circle cx="683" cy="662.7" r="11.9" fill="url(#ringg)"/><circle cx="683" cy="662.7" r="10.8" fill="#8c8c8c"/><circle cx="683" cy="662.7" r="10.3" fill="url(#gg)"/>
<path d="M677.7 657.2L682.2 662.7 679.9 662.7C680 665 681.1 666.5 683.5 666.8L683.5 670.1C679 669.9 676.1 667 675.9 662.7L673.4 662.7Z" fill="url(#wg)"/>
<path d="M677.7 657.2L682.2 662.7 679.9 662.7C680 665 681.1 666.5 683.5 666.8L683.5 670.1C679 669.9 676.1 667 675.9 662.7L673.4 662.7Z" fill="url(#wg)" transform="rotate(180 683 662.8)"/>
<!-- prev -->
<circle cx="726" cy="662.8" r="13.2" fill="#dedede"/><circle cx="726" cy="662.8" r="12.6" fill="#a2a2a2"/><circle cx="726" cy="662.8" r="11.9" fill="url(#ringg)"/><circle cx="726" cy="662.8" r="10.8" fill="#8c8c8c"/><circle cx="726" cy="662.8" r="10.3" fill="url(#bb)"/>
<path d="M721.8 657.8h2.9v10h-2.9zM724.7 662.8L730.6 657.8V667.8Z" fill="url(#wg)"/>
<!-- next -->
<circle cx="760.3" cy="662.8" r="13.2" fill="#dedede"/><circle cx="760.3" cy="662.8" r="12.6" fill="#a2a2a2"/><circle cx="760.3" cy="662.8" r="11.9" fill="url(#ringg)"/><circle cx="760.3" cy="662.8" r="10.8" fill="#8c8c8c"/><circle cx="760.3" cy="662.8" r="10.3" fill="url(#bb)"/>
<path d="M762 657.8h2.9v10H762zM762 662.8L756.1 657.8V667.8Z" fill="url(#wg)"/>
</svg>
<!-- buttons -->
<div class="a" style="left:596px;top:692px;width:88px;height:21px;border:1px solid #2f86dd;border-radius:3px;background:#fdfdfd"></div>
<div class="a" style="left:599px;top:695px;width:82px;height:15px;background:
 repeating-conic-gradient(#000 0 25%,#fff 0 50%) 0 0/2px 2px"></div>
<div class="a" style="left:601px;top:697px;width:78px;height:11px;background:#fdfdfd"></div>
<svg class="a" style="left:621px;top:697px" width="16" height="12" viewBox="0 0 16 12"><path d="M1 6.2L3.2 4.6 6 7.2 13 0.8 15 1.6 6.4 11.2Z" fill="#3fb92c" stroke="#2c9420" stroke-width=".6"/></svg>
<div class="t" style="left:641px;top:696.4px;font-size:12.8px"><u>O</u>K</div>
<div class="btn" style="left:692px;top:692px;width:88px;height:21px"></div>
<svg class="a" style="left:711px;top:696px" width="14" height="14" viewBox="0 0 14 14"><defs><radialGradient id="rx" cx=".4" cy=".3" r=".8"><stop offset="0" stop-color="#f06a6a"/><stop offset=".6" stop-color="#d51b1b"/><stop offset="1" stop-color="#9c0d0d"/></radialGradient></defs><circle cx="7" cy="7" r="6.6" fill="url(#rx)"/><path d="M4.4 4.4L9.6 9.6M9.6 4.4L4.4 9.6" stroke="#fff" stroke-width="2.1" stroke-linecap="round"/></svg>
<div class="t" style="left:734px;top:697px;font-size:12.3px">W<u>r</u>óć</div>

<svg class="a" style="left:560px;top:190px" width="140" height="100" viewBox="560 190 140 100"><path d="M667.6 199.5L603 264" stroke="#fc0000" stroke-width="2.8"/><path d="M590 277.6L604.4 255 607.6 260.6 613.4 263.6Z" fill="#f80000"/></svg>
</body>
</html>
